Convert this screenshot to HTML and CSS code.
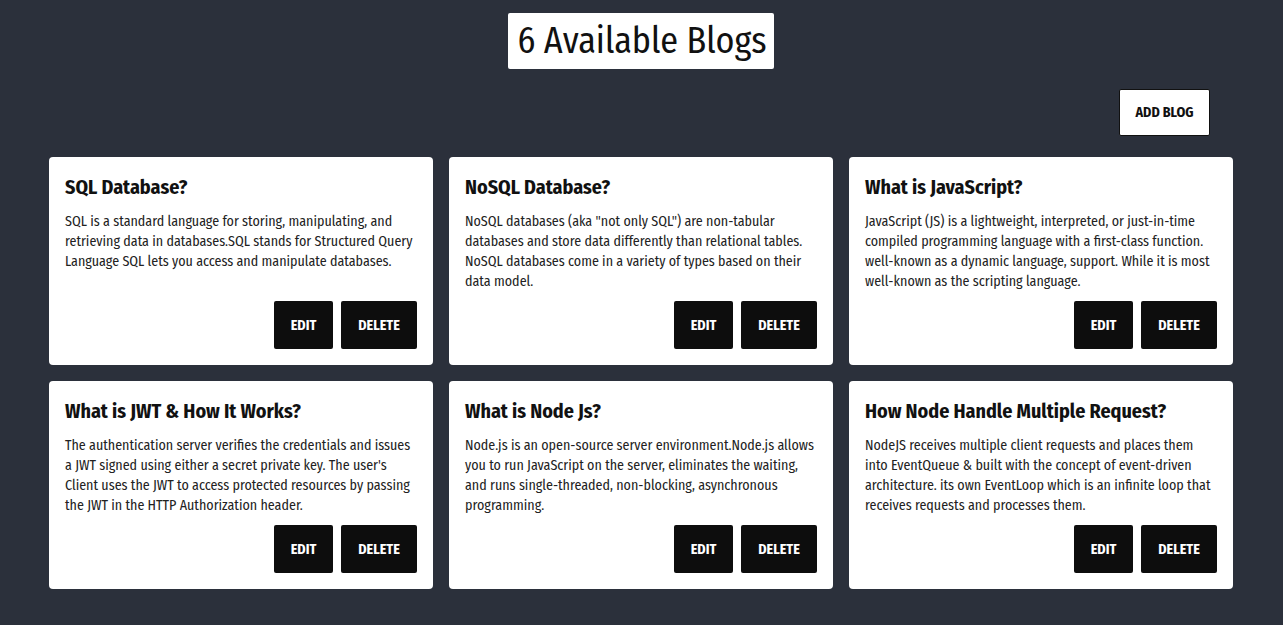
FILE: index.html
```html
<!DOCTYPE html>
<html>
<head>
<meta charset="utf-8">
<link rel="stylesheet" href="styles.css">
</head>
<body>
<div class="page">
  <header class="head">
    <h1 class="title">6 Available Blogs</h1>
  </header>
  <div class="toolbar">
    <button class="add">ADD BLOG</button>
  </div>
  <div class="grid">
    <div class="card">
      <h2>SQL Database?</h2>
      <p>SQL is a standard language for storing, manipulating, and retrieving data in databases.SQL stands for Structured Query Language SQL lets you access and manipulate databases.</p>
      <div class="actions"><button>EDIT</button><button>DELETE</button></div>
    </div>
    <div class="card">
      <h2>NoSQL Database?</h2>
      <p>NoSQL databases (aka "not only SQL") are non-tabular databases and store data differently than relational tables. NoSQL databases come in a variety of types based on their data model.</p>
      <div class="actions"><button>EDIT</button><button>DELETE</button></div>
    </div>
    <div class="card">
      <h2>What is JavaScript?</h2>
      <p>JavaScript (JS) is a lightweight, interpreted, or just-in-time compiled programming language with a first-class function. well-known as a dynamic language, support. While it is most well-known as the scripting language.</p>
      <div class="actions"><button>EDIT</button><button>DELETE</button></div>
    </div>
    <div class="card">
      <h2>What is JWT &amp; How It Works?</h2>
      <p>The authentication server verifies the credentials and issues a JWT signed using either a secret private key. The user's Client uses the JWT to access protected resources by passing the JWT in the HTTP Authorization header.</p>
      <div class="actions"><button>EDIT</button><button>DELETE</button></div>
    </div>
    <div class="card">
      <h2>What is Node Js?</h2>
      <p>Node.js is an open-source server environment.Node.js allows you to run JavaScript on the server, eliminates the waiting, and runs single-threaded, non-blocking, asynchronous programming.</p>
      <div class="actions"><button>EDIT</button><button>DELETE</button></div>
    </div>
    <div class="card">
      <h2>How Node Handle Multiple Request?</h2>
      <p>NodeJS receives multiple client requests and places them into EventQueue &amp; built with the concept of event-driven architecture. its own EventLoop which is an infinite loop that receives requests and processes them.</p>
      <div class="actions"><button>EDIT</button><button>DELETE</button></div>
    </div>
  </div>
</div>
</body>
</html>
```
FILE: styles.css
```css
html, body {
  margin: 0;
  padding: 0;
  background: #2b303b;
  font-family: "Fira Sans Condensed", "Fira Sans", Roboto, sans-serif;
  color: #111;
}
.page {
  width: 1184px;
  margin: 0 50px 0 49px;
  padding-top: 13px;
}
.head {
  display: flex;
  justify-content: center;
}
.title {
  margin: 0;
  background: #fff;
  border-radius: 2px;
  font-size: 36px;
  font-weight: 400;
  line-height: 56px;
  height: 56px;
  padding: 0 7px 0 9px;
}
.toolbar {
  display: flex;
  justify-content: flex-end;
  padding: 20px 23px 21px 0;
}
.add {
  width: 91px;
  height: 47px;
  background: #fff;
  border: 1px solid #111;
  border-radius: 2px;
  font-family: inherit;
  font-weight: 700;
  font-size: 14px;
  color: #111;
  padding: 0;
}
.grid {
  display: grid;
  grid-template-columns: repeat(3, 384px);
  gap: 16px;
}
.card {
  background: #fff;
  border-radius: 4px;
  padding: 18px 16px 16px;
  height: 208px;
  box-sizing: border-box;
  display: flex;
  flex-direction: column;
}
.card h2 {
  margin: 0 0 13px;
  font-size: 20px;
  line-height: 24px;
  font-weight: 700;
  color: #111;
}
.card p {
  margin: 0;
  font-size: 14px;
  line-height: 20px;
  color: #222;
}
.actions {
  margin-top: auto;
  display: flex;
  justify-content: flex-end;
  gap: 8px;
}
.actions button {
  height: 48px;
  background: #0d0d0d;
  color: #fff;
  border: none;
  border-radius: 2px;
  font-family: inherit;
  font-weight: 700;
  font-size: 14px;
  padding: 0;
}
.actions button:first-child {
  width: 59px;
}
.actions button:last-child {
  width: 76px;
}
```
